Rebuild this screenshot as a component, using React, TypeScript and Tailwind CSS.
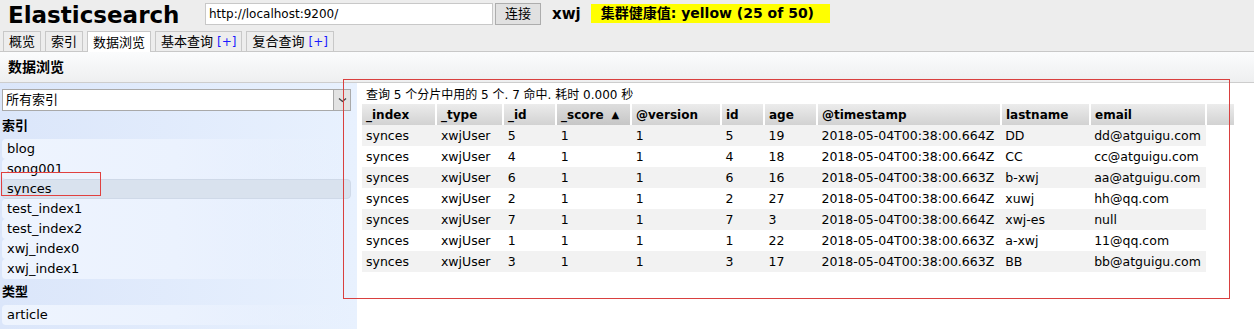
import React from "react";

const cols = [
  { key: "_index", w: 75 },
  { key: "_type", w: 67 },
  { key: "_id", w: 53 },
  { key: "_score", w: 75, sorted: true },
  { key: "@version", w: 90 },
  { key: "id", w: 43 },
  { key: "age", w: 53 },
  { key: "@timestamp", w: 184 },
  { key: "lastname", w: 89 },
  { key: "email", w: 116 },
];

const rows = [
  ["synces", "xwjUser", "5", "1", "1", "5", "19", "2018-05-04T00:38:00.664Z", "DD", "dd@atguigu.com"],
  ["synces", "xwjUser", "4", "1", "1", "4", "18", "2018-05-04T00:38:00.664Z", "CC", "cc@atguigu.com"],
  ["synces", "xwjUser", "6", "1", "1", "6", "16", "2018-05-04T00:38:00.663Z", "b-xwj", "aa@atguigu.com"],
  ["synces", "xwjUser", "2", "1", "1", "2", "27", "2018-05-04T00:38:00.664Z", "xuwj", "hh@qq.com"],
  ["synces", "xwjUser", "7", "1", "1", "7", "3", "2018-05-04T00:38:00.664Z", "xwj-es", "null"],
  ["synces", "xwjUser", "1", "1", "1", "1", "22", "2018-05-04T00:38:00.663Z", "a-xwj", "11@qq.com"],
  ["synces", "xwjUser", "3", "1", "1", "3", "17", "2018-05-04T00:38:00.663Z", "BB", "bb@atguigu.com"],
];

const indices = ["blog", "song001", "synces", "test_index1", "test_index2", "xwj_index0", "xwj_index1"];

const tabs = [
  { label: "概览" },
  { label: "索引" },
  { label: "数据浏览", active: true },
  { label: "基本查询", plus: true },
  { label: "复合查询", plus: true },
];

function ListItem({ name, selected = false }: { name: string; selected?: boolean }) {
  return (
    <div
      className={
        selected
          ? "ml-[2px] mr-[6px] h-[20px] rounded-[4px] border border-[#cfd9e8] bg-[#d9e2ee] pl-[4px] leading-[18px]"
          : "ml-[2px] mr-[6px] h-[20px] rounded-[4px] bg-gradient-to-r from-[#eef4fe] via-[#ebf2fe] to-transparent pl-[5px] leading-[20px]"
      }
    >
      {name}
    </div>
  );
}

export default function App() {
  return (
    <div
      className="relative h-[329px] w-[1254px] overflow-hidden bg-white text-black"
      style={{ fontFamily: '"DejaVu Sans", "Noto Sans CJK SC", sans-serif' }}
    >
      {/* header */}
      <div className="bg-[#ededed]">
        <div className="flex h-[31px] items-start">
          <div className="w-[205px] pl-[8px] text-[23px] font-bold leading-[30px]">Elasticsearch</div>
          <div className="mt-[3px] h-[22px] w-[288px] border border-[#c8c8c8] bg-white pl-[3px] text-[12px] leading-[20px]">
            http://localhost:9200/
          </div>
          <div className="ml-[2px] mt-[3px] h-[22px] w-[46px] border border-[#adadad] bg-[#e1e1e1] text-center text-[13px] leading-[20px]">
            连接
          </div>
          <div className="ml-[11px] mt-[3px] text-[15px] font-bold leading-[22px]">xwj</div>
          <div className="ml-[10px] mt-[4px] h-[19px] w-[239px] bg-[#ffff00] pl-[10px] text-[14px] font-bold leading-[19px]">
            集群健康值: yellow (25 of 50)
          </div>
        </div>
        <div className="flex h-[21px] items-end gap-[4px] border-b border-[#c8c8c8] pl-[3px]">
          {tabs.map((t) => (
            <div
              key={t.label}
              className={
                t.active
                  ? "-mb-px h-[21px] border border-b-0 border-[#c8c8c8] bg-white px-[5px] text-[13px] leading-[21px]"
                  : "h-[20px] border border-b-0 border-[#c8c8c8] bg-[#ededed] px-[5px] text-[13px] leading-[20px]"
              }
            >
              {t.label}
              {t.plus && <span className="ml-[4px] text-[12px] text-[#1a1aff]">[+]</span>}
            </div>
          ))}
        </div>
      </div>

      {/* section title */}
      <div className="h-[31px] border-b border-[#cdcdcd] bg-gradient-to-b from-[#fbfcfd] to-[#eeeff0] pl-[8px] text-[14px] font-bold leading-[30px]">
        数据浏览
      </div>

      <div className="flex h-[247px]">
        {/* left panel */}
        <div className="w-[357px] bg-gradient-to-r from-[#dbe6fa] to-[#e8f1fe] pt-[6px] text-[13px]">
          <div className="ml-[2px] mr-[6px] flex h-[22px] border border-[#a9a9a9] bg-white">
            <div className="flex-1 pl-[3px] text-[13px] leading-[20px]">所有索引</div>
            <div className="flex w-[17px] items-center justify-center border-l border-[#a9a9a9] bg-[#e3e3e3]">
              <svg width="9" height="6" viewBox="0 0 9 6">
                <path d="M1 1.5 L4.5 4.5 L8 1.5" fill="none" stroke="#444" strokeWidth="1.3" />
              </svg>
            </div>
          </div>
          <div className="mt-[4px] h-[22px] pl-[2px] text-[13px] font-bold leading-[22px]">索引</div>
          <div className="mt-[2px] flex flex-col">
            {indices.map((n) => (
              <ListItem key={n} name={n} selected={n === "synces"} />
            ))}
          </div>
          <div className="mt-[3px] h-[20px] pl-[2px] text-[13px] font-bold leading-[20px]">类型</div>
          <div className="mt-[3px] flex flex-col">
            <ListItem name="article" />
          </div>
        </div>

        {/* right content */}
        <div className="flex-1 pl-[5px] pt-[4px]">
          <div className="h-[17px] pl-[4px] text-[12px] leading-[17px]">查询 5 个分片中用的 5 个. 7 命中. 耗时 0.000 秒</div>
          <div className="flex">
            {cols.map((c) => (
              <div key={c.key} className="pr-[2px]" style={{ width: c.w }}>
                <div
                  className={
                    c.sorted
                      ? "flex h-[21px] items-center bg-gradient-to-b from-[#dedede] to-[#c6c6c6] pl-[4px] text-[12px] font-bold"
                      : "flex h-[21px] items-center bg-gradient-to-b from-[#ececec] to-[#d2d2d2] pl-[4px] text-[12px] font-bold"
                  }
                >
                  {c.key}
                  {c.sorted && <span className="ml-[8px] text-[10px]">▲</span>}
                </div>
              </div>
            ))}
            <div className="h-[21px] w-[27px] bg-gradient-to-b from-[#ececec] to-[#d2d2d2]" />
          </div>
          {rows.map((r, i) => (
            <div key={i} className={i % 2 === 0 ? "flex h-[21px] w-[844px] bg-[#f2f2f2]" : "flex h-[21px] w-[844px] bg-white"}>
              {r.map((v, j) => (
                <div key={j} className="pl-[4px] text-[12.5px] leading-[21px]" style={{ width: cols[j].w }}>
                  {v}
                </div>
              ))}
            </div>
          ))}
        </div>
      </div>

      {/* annotation overlays */}
      <div className="pointer-events-none absolute left-[343px] top-[79px] h-[220px] w-[887px] border border-[#d9403f]" />
      <div className="pointer-events-none absolute left-[1px] top-[172px] h-[24px] w-[100px] border border-[#e0403f]" />
    </div>
  );
}
